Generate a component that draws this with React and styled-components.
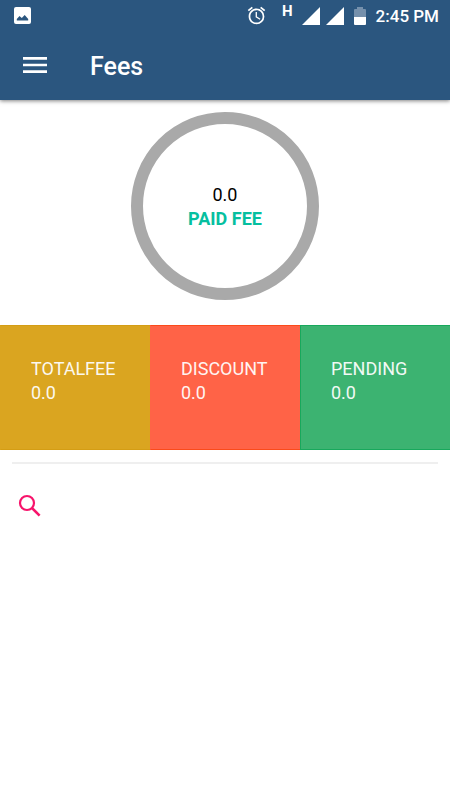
import React from 'react'
import styled, { createGlobalStyle } from 'styled-components'
import { MdAccessAlarm, MdMenu } from 'react-icons/md'

const GlobalStyle = createGlobalStyle`
  * {
    box-sizing: border-box;
  }
  body {
    margin: 0;
    background-color: #ffffff;
    font-family: Roboto, "Liberation Sans", sans-serif;
  }
`

const Header = styled.header`
  background-color: #2b567f;
  color: #ffffff;
  box-shadow: 0 1px 4px rgba(0, 0, 0, 0.5);
`

const StatusBar = styled.div`
  display: flex;
  align-items: center;
  justify-content: space-between;
  height: 31px;
  padding: 0 11px 0 14px;
`

const StatusGroup = styled.div`
  display: flex;
  align-items: center;
`

const AlarmIcon = styled(MdAccessAlarm)`
  width: 21px;
  height: 21px;
  margin-right: 15px;
`

const NetworkType = styled.span`
  font-size: 15px;
  font-weight: 700;
  line-height: 16px;
  padding-bottom: 9px;
  margin-right: 9px;
`

const SignalIcon = styled.svg`
  display: block;
  width: 18px;
  height: 18px;
  margin-right: 6px;
`

const BatteryIcon = styled.svg`
  display: block;
  width: 12px;
  height: 18px;
  margin: 0 10px 0 4px;
`

const Clock = styled.span`
  font-size: 17px;
  font-weight: 500;
  line-height: 32px;
`

const Toolbar = styled.div`
  display: flex;
  align-items: flex-start;
  height: 69px;
  padding: 18px 19px 0;
`

const IconButton = styled.button`
  display: flex;
  padding: 0;
  border: 0;
  background: none;
  color: ${props => props.$color};
  font-size: ${props => props.$size};
  cursor: pointer;
`

const Title = styled.h1`
  margin: 0 0 0 39px;
  font-size: 25px;
  font-weight: 500;
  line-height: 36px;
`

const PaidSection = styled.section`
  display: flex;
  justify-content: center;
  padding: 12px 0 25px;
`

const Ring = styled.div`
  display: flex;
  flex-direction: column;
  align-items: center;
  justify-content: center;
  width: 188px;
  height: 188px;
  padding-top: 2px;
  border: 12px solid #a9a9a9;
  border-radius: 50%;
  font-size: 18px;
  line-height: 24px;
`

const PaidAmount = styled.span`
  color: #000000;
`

const PaidLabel = styled.span`
  color: #06bf9f;
  font-weight: 700;
`

const Cards = styled.section`
  display: grid;
  grid-template-columns: repeat(3, 1fr);
`

const Card = styled.div`
  height: 125px;
  padding: 31px 0 0 30px;
  border: 1px solid ${props => props.$border};
  border-left-color: ${props => (props.$edge ? props.$border : props.$fill)};
  border-right: 0;
  background-color: ${props => props.$fill};
  color: #ffffff;
  font-size: 18px;
  line-height: 24px;
`

const CardText = styled.div`
  opacity: 0.93;
`

const Divider = styled.hr`
  height: 2px;
  margin: 12px 12px 0;
  border: 0;
  background-color: #efefef;
`

const SearchRow = styled.div`
  display: flex;
  padding: 27px 15px;
`

const cards = [
  { label: 'TOTALFEE', amount: '0.0', fill: '#daa520', border: '#d49d14' },
  { label: 'DISCOUNT', amount: '0.0', fill: '#ff6347', border: '#fb4a1a' },
  { label: 'PENDING', amount: '0.0', fill: '#3cb371', border: '#18a85c', edge: true },
]

const Signal = () => (
  <SignalIcon viewBox="0 0 18 18" aria-hidden="true">
    <path d="M18 0v18H0z" fill="#ffffff" />
  </SignalIcon>
)

const PictureIcon = () => (
  <svg width="17" height="17" viewBox="0 0 17 17" aria-hidden="true">
    <rect width="17" height="17" rx="2" fill="#ffffff" />
    <path d="M2.8 13.5V12l2.7-2.9 2.3 2 2.9-3.2 3.5 4v1.6z" fill="#2b567f" />
  </svg>
)

const Battery = () => (
  <BatteryIcon viewBox="0 0 12 18" aria-hidden="true">
    <path d="M3 0h6v2h2a1 1 0 0 1 1 1v7H0V3a1 1 0 0 1 1-1h2z" fill="#7590ac" />
    <path d="M0 10h12v7a1 1 0 0 1-1 1H1a1 1 0 0 1-1-1z" fill="#ffffff" />
  </BatteryIcon>
)

const SearchIcon = () => (
  <svg width="30" height="30" viewBox="0 0 30 30" fill="none" stroke="currentColor" aria-hidden="true">
    <circle cx="12" cy="12" r="7" strokeWidth="2.2" />
    <path d="M16.8 16.8l7.8 7.8" strokeWidth="2.6" />
  </svg>
)

export default () => {
  return (
    <>
      <GlobalStyle />
      <Header>
        <StatusBar>
          <PictureIcon />
          <StatusGroup>
            <AlarmIcon />
            <NetworkType>H</NetworkType>
            <Signal />
            <Signal />
            <Battery />
            <Clock>2:45 PM</Clock>
          </StatusGroup>
        </StatusBar>
        <Toolbar>
          <IconButton $color="#ffffff" $size="32px" aria-label="Open menu">
            <MdMenu />
          </IconButton>
          <Title>Fees</Title>
        </Toolbar>
      </Header>
      <main>
        <PaidSection>
          <Ring>
            <PaidAmount>0.0</PaidAmount>
            <PaidLabel>PAID FEE</PaidLabel>
          </Ring>
        </PaidSection>
        <Cards>
          {cards.map(card => (
            <Card key={card.label} $fill={card.fill} $border={card.border} $edge={card.edge}>
              <CardText>{card.label}</CardText>
              <CardText>{card.amount}</CardText>
            </Card>
          ))}
        </Cards>
        <Divider />
        <SearchRow>
          <IconButton $color="#f7146b" $size="30px" aria-label="Search">
            <SearchIcon />
          </IconButton>
        </SearchRow>
      </main>
    </>
  )
}
